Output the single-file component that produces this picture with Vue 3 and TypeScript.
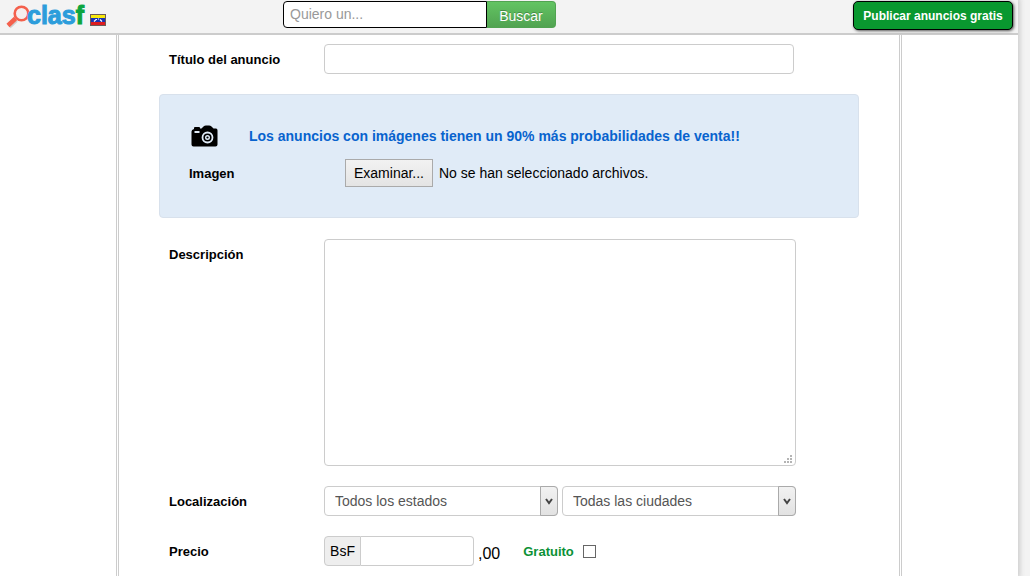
<script setup lang="ts">
import { ref } from 'vue'

const query = ref('')
const title = ref('')
const description = ref('')
const state = ref('all')
const city = ref('all')
const price = ref('')
const free = ref(false)
const picker = ref<HTMLInputElement | null>(null)
const fileStatus = ref('No se han seleccionado archivos.')

function browse(): void {
  picker.value?.click()
}

function onFiles(): void {
  const files = picker.value?.files
  fileStatus.value = files && files.length
    ? Array.from(files).map((f) => f.name).join(', ')
    : 'No se han seleccionado archivos.'
}
</script>

<template>
  <div class="page">
    <header class="topbar">
      <a class="brand" href="#" aria-label="clasf Venezuela">
        <svg class="lens" viewBox="0 0 24 25" aria-hidden="true">
          <path d="M3 21.500 10 15" stroke="#cfcfcf" stroke-width="5" />
          <path d="M2 20.500 9.500 13.500" stroke="#f4604c" stroke-width="4.500" />
          <circle cx="15.500" cy="8.500" r="6.800" fill="#f6eeee" stroke="#f4604c" stroke-width="2.600" />
        </svg>
        <span class="word">clas<span class="word-end">f</span></span>
        <svg class="flag" viewBox="0 0 16 12" aria-hidden="true">
          <rect width="16" height="12" fill="#6d5a58" />
          <rect x="1" y="1" width="14" height="4" fill="#f7e80c" />
          <rect x="1" y="4" width="14" height="4" fill="#1733b5" />
          <rect x="1" y="8" width="14" height="3" fill="#dc1c20" />
          <path d="M4 7.500 6 5.500H7M8 5H9M10 5.500 12 7.500" fill="none" stroke="#fff" stroke-width="1.200" />
        </svg>
      </a>
      <form class="search" @submit.prevent>
        <input v-model="query" class="search-box" type="text" placeholder="Quiero un..." aria-label="Quiero un...">
        <button class="search-btn" type="submit">Buscar</button>
      </form>
      <button class="publish" type="button">Publicar anuncios gratis</button>
    </header>

    <main class="sheet">
      <form class="form" @submit.prevent>
        <div class="row">
          <label class="name" for="title">Título del anuncio</label>
          <div class="controls"><input id="title" v-model="title" class="field title" type="text"></div>
        </div>

        <section class="photo">
          <div class="photo-head">
            <svg class="camera" viewBox="0 0 27 22" aria-hidden="true">
              <path d="M3 4V3Q3 2 4 2H8Q9 2 9 3V3.500H10.500L12.500 1.500Q13.500 .5 15 .5H18Q19.500 .5 20.500 1.500L22.500 3.500H25Q26.500 3.500 26.500 5.500V19.500Q26.500 21.500 24.500 21.500H2.500Q.5 21.500 .5 19.500V6.500Q.5 4.500 3 4Z" fill="#000" />
              <rect x="3.500" y="6" width="5" height="2" fill="#e0ebf7" />
              <circle cx="16.500" cy="12.500" r="5" fill="none" stroke="#e0ebf7" stroke-width="1.800" />
              <circle cx="16.500" cy="12.500" r="1.800" fill="none" stroke="#e0ebf7" stroke-width="1.400" />
            </svg>
            <strong class="tip">Los anuncios con imágenes tienen un 90% más probabilidades de venta!!</strong>
          </div>
          <div class="photo-row">
            <label class="name" for="browse">Imagen</label>
            <button id="browse" class="browse" type="button" @click="browse">Examinar...</button>
            <input ref="picker" type="file" accept="image/*" multiple hidden @change="onFiles">
            <span class="status">{{ fileStatus }}</span>
          </div>
        </section>

        <div class="row tall">
          <label class="name" for="description">Descripción</label>
          <div class="controls area-wrap">
            <textarea id="description" v-model="description" class="field area"></textarea>
            <svg class="grip" viewBox="0 0 8 8" aria-hidden="true">
              <path d="M6 0h2v2H6zM3 3h2v2H3zM6 3h2v2H6zM0 6h2v2H0zM3 6h2v2H3zM6 6h2v2H6z" fill="#b4b4b4" />
            </svg>
          </div>
        </div>

        <div class="row">
          <label class="name" for="state">Localización</label>
          <div class="controls selects">
            <span class="select-wrap">
              <select id="state" v-model="state" class="field select">
                <option value="all">Todos los estados</option>
              </select>
              <span class="arrow"><svg viewBox="0 0 8 7" aria-hidden="true"><path d="M1 1 4 5 7 1" fill="none" stroke="#444" stroke-width="2" /></svg></span>
            </span>
            <span class="select-wrap">
              <select v-model="city" class="field select" aria-label="Ciudad">
                <option value="all">Todas las ciudades</option>
              </select>
              <span class="arrow"><svg viewBox="0 0 8 7" aria-hidden="true"><path d="M1 1 4 5 7 1" fill="none" stroke="#444" stroke-width="2" /></svg></span>
            </span>
          </div>
        </div>

        <div class="row">
          <label class="name" for="price">Precio</label>
          <div class="controls price-row">
            <span class="unit">BsF</span>
            <input id="price" v-model="price" class="field price" type="text">
            <span class="cents">,00</span>
            <label class="free" for="free">Gratuito</label>
            <input id="free" v-model="free" class="check" type="checkbox">
          </div>
        </div>
      </form>
    </main>
  </div>
</template>

<style>
html {
  background: #f3f3f3;
}

body {
  margin: 0;
  overflow: hidden;
}
</style>

<style scoped>
.page,
.page * {
  box-sizing: border-box;
}

.page {
  min-height: 100vh;
  margin-right: 12px;
  display: flex;
  flex-direction: column;
  background: #fff;
  box-shadow: 0 0 5px 2px #ccc;
  font-family: "Liberation Sans", Arial, sans-serif;
  font-size: 14px;
  color: #000;
}

button,
input,
select,
textarea {
  font-family: inherit;
  margin: 0;
}

.topbar {
  display: grid;
  grid-template-columns: 283px 1fr auto;
  align-items: start;
  height: 35px;
  padding: 1px 5px 0 0;
  background: #f3f3f3;
  border-bottom: 2px solid #ccc;
}

.brand {
  display: flex;
  align-items: flex-start;
  padding-left: 6px;
  text-decoration: none;
}

.lens {
  width: 24px;
  height: 25px;
  margin-top: 4px;
  fill: none;
}

.word {
  margin-left: -3px;
  font-size: 25px;
  font-weight: 700;
  line-height: 29px;
  color: #2c9ddb;
  -webkit-text-stroke: 1px currentColor;
}

.word-end {
  color: #0ba53e;
}

.flag {
  width: 16px;
  height: 12px;
  margin: 13px 0 0 6px;
}

.search {
  display: flex;
}

.search-box {
  width: 204px;
  height: 27px;
  padding: 0 6px 2px;
  border: 1px solid #000;
  border-radius: 4px 0 0 4px;
  background: #fff;
  font-size: 14px;
}

.search-box::placeholder {
  color: #999;
}

.search-btn {
  width: 69px;
  height: 27px;
  padding: 2px 0 0;
  border: 1px solid #51a351;
  border-left: 0;
  border-radius: 0 4px 4px 0;
  background: linear-gradient(#62c462, #51a351);
  font-size: 14px;
  color: #fff;
  text-shadow: 0 -1px 0 rgba(0, 0, 0, 0.25);
}

.publish {
  width: 160px;
  height: 29px;
  padding: 0;
  border: 1px solid #000;
  border-radius: 5px;
  background: #09982f;
  box-shadow: 1px 1px 3px #555;
  font-size: 12px;
  font-weight: 700;
  color: #fff;
}

.sheet {
  flex: 1;
  width: 786px;
  max-width: 100%;
  margin: 0 auto;
  padding: 9px 40px 0;
  border: 3px double #ccc;
  border-width: 0 3px;
}

.form {
  display: flex;
  flex-direction: column;
  gap: 20px;
}

.row {
  display: grid;
  grid-template-columns: 155px minmax(0, 472px);
  padding-left: 10px;
}

.name {
  font-size: 13px;
  font-weight: 700;
  line-height: 31px;
}

.row .name {
  height: 30px;
}

.field {
  height: 30px;
  border: 1px solid #ccc;
  border-radius: 4px;
  background: #fff;
  font-size: 14px;
  color: #555;
}

.controls {
  padding-right: 2px;
}

.title {
  display: block;
  width: 100%;
  padding: 0 6px;
}

.photo {
  padding: 26px 29px 30px;
  border: 1px solid #d8e1ec;
  border-radius: 4px;
  background: #e0ebf7;
}

.photo-head {
  display: flex;
  align-items: center;
  height: 30px;
  gap: 31px;
}

.camera {
  width: 27px;
  height: 22px;
  margin-left: 2px;
}

.tip {
  font-size: 14px;
  color: #0863ce;
}

.photo-row {
  display: flex;
  align-items: center;
  height: 28px;
  margin-top: 8px;
}

.photo-row .name {
  width: 156px;
}

.browse {
  width: 88px;
  height: 28px;
  padding: 0;
  border: 1px solid #aaa;
  background: linear-gradient(#f2f2f2, #e4e4e4);
  font-size: 14px;
  color: #000;
}

.status {
  margin-left: 6px;
}

.tall {
  margin-top: 1px;
}

.area-wrap {
  position: relative;
  padding: 0;
}

.area {
  display: block;
  width: 100%;
  height: 227px;
  padding: 4px 6px;
  resize: none;
}

.grip {
  position: absolute;
  right: 4px;
  bottom: 3px;
  width: 8px;
  height: 8px;
}

.selects {
  display: flex;
  gap: 4px;
  padding: 0;
}

.select-wrap {
  position: relative;
  flex: 1;
}

.select {
  display: block;
  width: 100%;
  padding: 0 24px 0 10px;
  appearance: none;
}

.arrow {
  position: absolute;
  top: 0;
  right: 0;
  display: flex;
  align-items: center;
  justify-content: center;
  width: 18px;
  height: 30px;
  border: 1px solid #aaa;
  border-radius: 0 4px 4px 0;
  background: linear-gradient(#f2f2f2, #e2e2e2);
  pointer-events: none;
}

.arrow svg {
  width: 8px;
  height: 7px;
}

.price-row {
  display: flex;
  align-items: center;
}

.unit {
  width: 37px;
  height: 30px;
  border: 1px solid #ccc;
  border-radius: 4px 0 0 4px;
  background: #eee;
  line-height: 28px;
  text-align: center;
}

.price {
  width: 113px;
  padding: 0 6px;
  border-left: 0;
  border-radius: 0 4px 4px 0;
}

.cents {
  padding-top: 6px;
  margin-left: 4px;
  font-size: 16px;
}

.free {
  margin-left: 23px;
  font-size: 13px;
  font-weight: 700;
  color: #0b9136;
}

.check {
  width: 13px;
  height: 13px;
  margin-left: 9px;
  border: 1px solid #666;
  background: #fff;
  appearance: none;
}

.check:checked {
  background: #0b9136;
}
</style>
